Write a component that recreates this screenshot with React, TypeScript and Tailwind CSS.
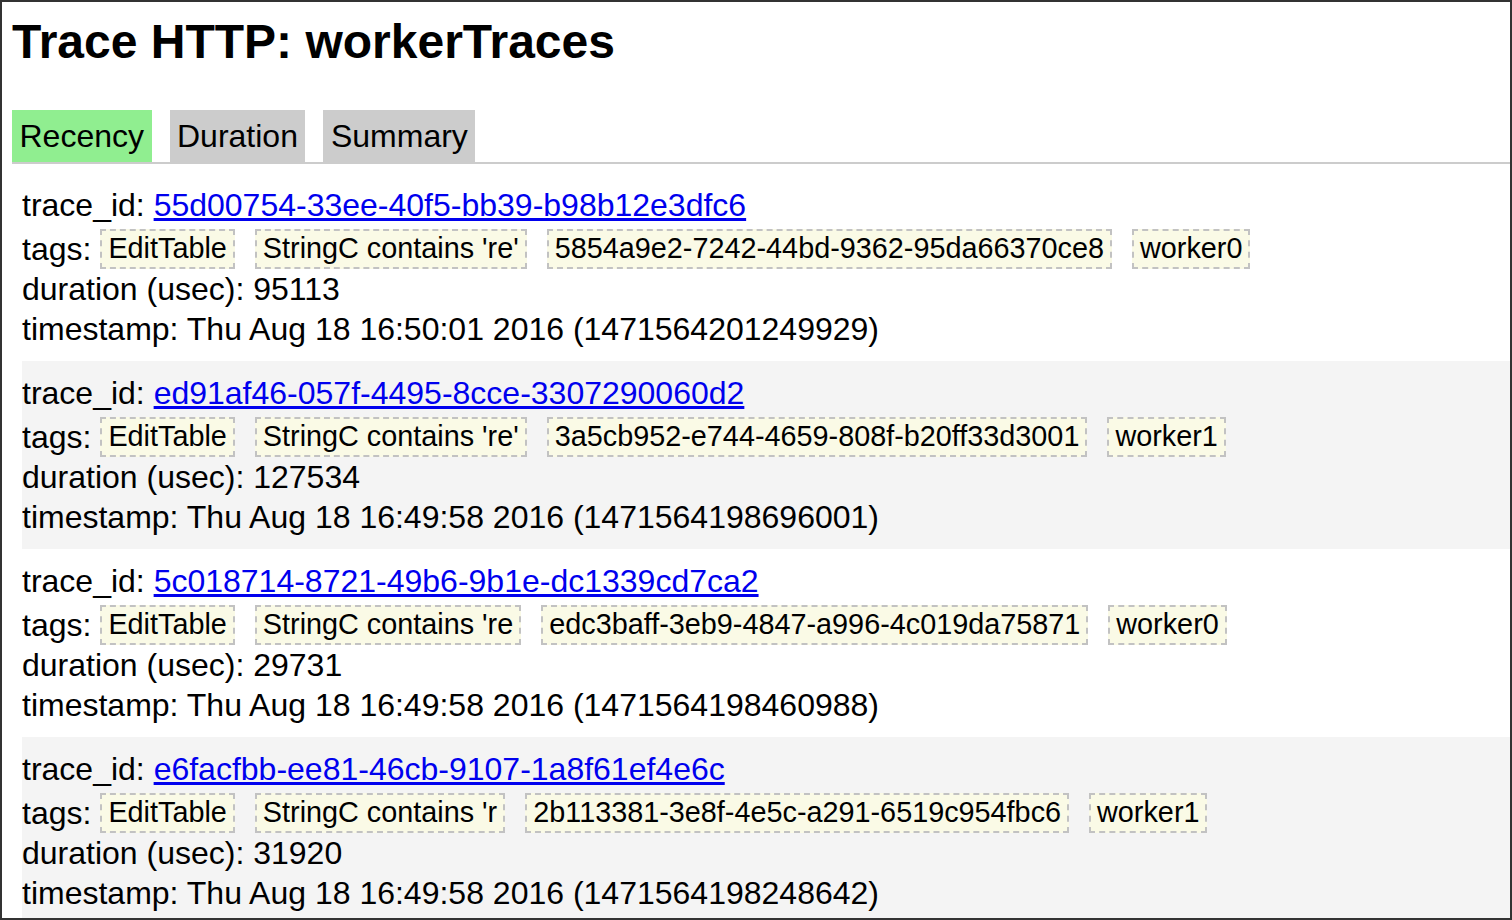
import React from 'react';

type Trace = {
  id: string;
  tags: string[];
  duration: string;
  timestamp: string;
};

const traces: Trace[] = [
  {
    id: '55d00754-33ee-40f5-bb39-b98b12e3dfc6',
    tags: ['EditTable', "StringC contains 're'", '5854a9e2-7242-44bd-9362-95da66370ce8', 'worker0'],
    duration: '95113',
    timestamp: 'Thu Aug 18 16:50:01 2016 (1471564201249929)',
  },
  {
    id: 'ed91af46-057f-4495-8cce-3307290060d2',
    tags: ['EditTable', "StringC contains 're'", '3a5cb952-e744-4659-808f-b20ff33d3001', 'worker1'],
    duration: '127534',
    timestamp: 'Thu Aug 18 16:49:58 2016 (1471564198696001)',
  },
  {
    id: '5c018714-8721-49b6-9b1e-dc1339cd7ca2',
    tags: ['EditTable', "StringC contains 're", 'edc3baff-3eb9-4847-a996-4c019da75871', 'worker0'],
    duration: '29731',
    timestamp: 'Thu Aug 18 16:49:58 2016 (1471564198460988)',
  },
  {
    id: 'e6facfbb-ee81-46cb-9107-1a8f61ef4e6c',
    tags: ['EditTable', "StringC contains 'r", '2b113381-3e8f-4e5c-a291-6519c954fbc6', 'worker1'],
    duration: '31920',
    timestamp: 'Thu Aug 18 16:49:58 2016 (1471564198248642)',
  },
];

const tabs = [
  { label: 'Recency', active: true },
  { label: 'Duration', active: false },
  { label: 'Summary', active: false },
];

function TraceRow({ trace, shaded }: { trace: Trace; shaded: boolean }) {
  return (
    <div className={`py-[12px] ${shaded ? 'bg-[#f4f4f4]' : 'bg-white'}`}>
      <div className="h-[40px] flex items-center whitespace-pre">
        <span>trace_id: </span>
        <a href="#" className="text-[#0000ee] underline">
          {trace.id}
        </a>
      </div>
      {/* tags */}
      <div className="h-[44px] flex items-end">
        <span className="leading-[40px]">tags:</span>
        <div className="ml-[9px] flex items-center gap-5">
          {trace.tags.map((tag) => (
            <span
              key={tag}
              className="h-[40px] flex items-center px-[6px] border-2 border-dashed border-[#c2c2c2] bg-[#fafae6] text-[28.8px] whitespace-pre"
            >
              {tag}
            </span>
          ))}
        </div>
      </div>
      <div className="h-[40px] flex items-center">duration (usec): {trace.duration}</div>
      <div className="h-[40px] flex items-center">timestamp: {trace.timestamp}</div>
    </div>
  );
}

export default function App() {
  return (
    <div
      className="w-[1512px] h-[920px] overflow-hidden border-2 border-[#333] bg-white text-black pt-[12px] pl-[10px] text-[32px]"
      style={{ fontFamily: '"Liberation Sans", Arial, sans-serif' }}
    >
      <h1 className="text-[48px] font-bold leading-[55px]">Trace HTTP: workerTraces</h1>

      {/* Tabs */}
      <div className="mt-[41px] flex gap-[18px] border-b-2 border-[#ccc]">
        {tabs.map((tab) => (
          <div
            key={tab.label}
            className={`h-[52px] flex items-center px-[7.5px] ${tab.active ? 'bg-[#90ee90]' : 'bg-[#cccccc]'}`}
          >
            {tab.label}
          </div>
        ))}
      </div>

      <div className="mt-[9px] ml-[10px]">
        {traces.map((trace, i) => (
          <TraceRow key={trace.id} trace={trace} shaded={i % 2 === 1} />
        ))}
      </div>
    </div>
  );
}
